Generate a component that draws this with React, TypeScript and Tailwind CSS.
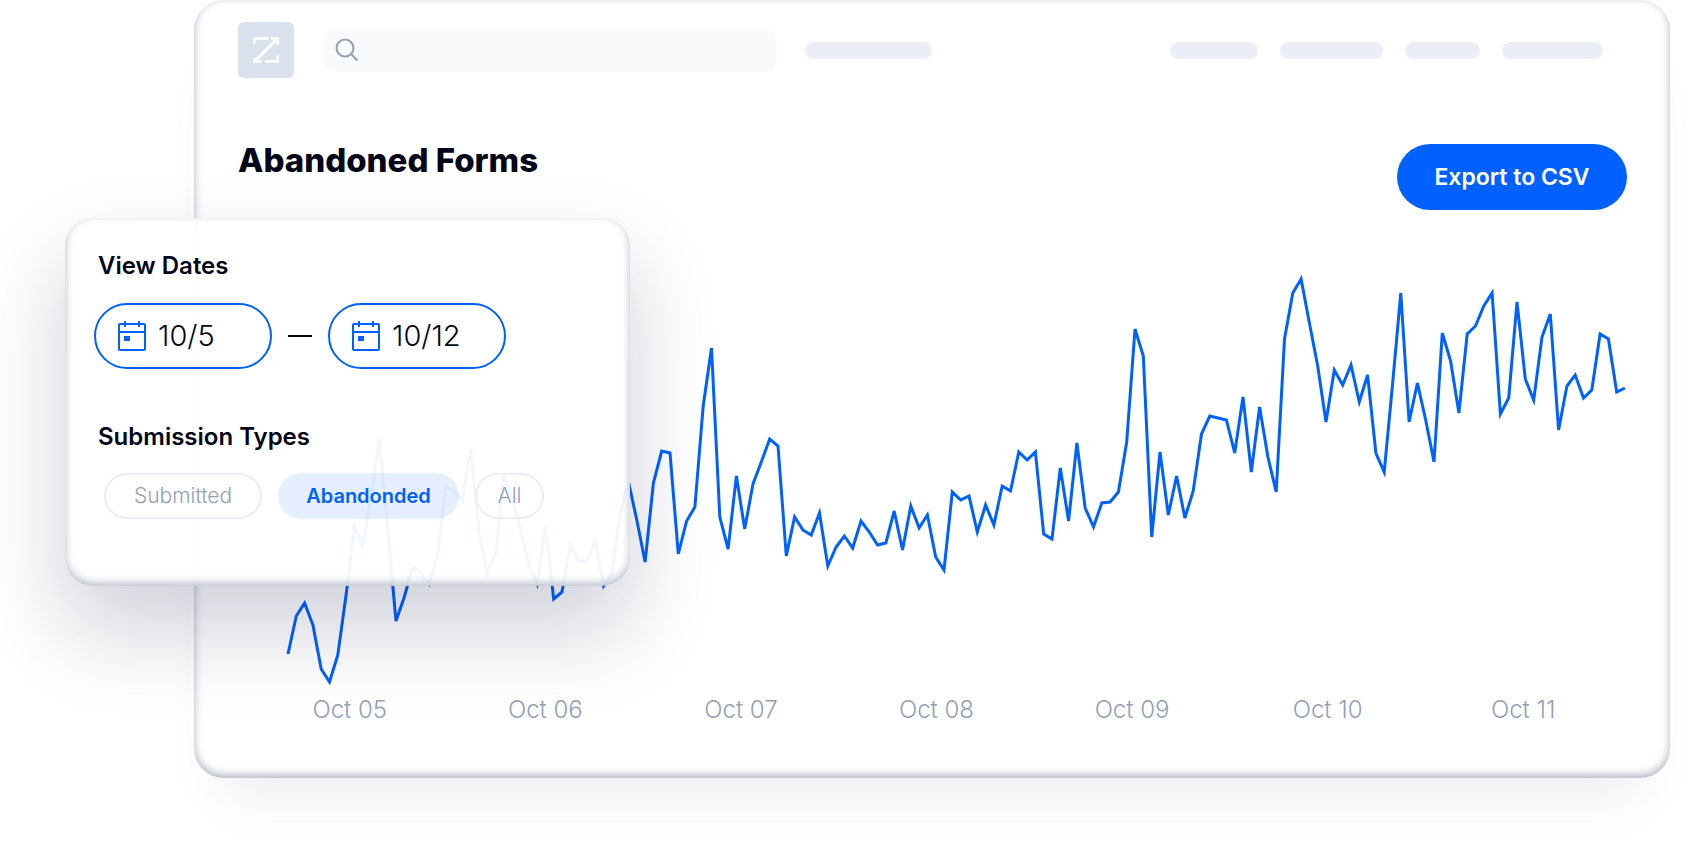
import React from 'react';

type SubmissionType = {
  id: string;
  label: string;
  width: string;
};

const CHART_WIDTH = 1337;
const CHART_HEIGHT = 420;

// Line heights measured down from the top of the chart
const points = [
  384, 346, 333, 355, 399, 412, 385, 325, 257, 275, 227, 168, 260, 351, 327, 297,
  303, 314, 286, 217, 221, 231, 179, 263, 303, 284, 206, 228, 260, 296, 314, 256,
  329, 322, 274, 291, 291, 270, 316, 304, 244, 212, 250, 292, 213, 181, 183, 284,
  251, 237, 136, 78, 247, 279, 206, 259, 214, 192, 169, 176, 286, 247, 260, 265,
  243, 296, 277, 266, 278, 251, 262, 275, 273, 241, 280, 236, 258, 245, 287, 300,
  222, 230, 226, 262, 235, 255, 216, 221, 182, 190, 182, 264, 269, 198, 251, 173,
  238, 257, 233, 232, 222, 172, 59, 86, 267, 182, 245, 206, 248, 221, 164, 146,
  148, 150, 183, 127, 202, 137, 187, 222, 69, 23, 9, 53, 96, 152, 100, 115,
  95, 132, 105, 183, 202, 115, 23, 152, 113, 150, 192, 63, 91, 143, 64, 56,
  36, 23, 144, 128, 32, 109, 130, 67, 44, 160, 116, 105, 128, 120, 64, 69,
  122, 118
];

const days = ["Oct 05", "Oct 06", "Oct 07", "Oct 08", "Oct 09", "Oct 10", "Oct 11"];

const submissionTypes: SubmissionType[] = [
  { id: "submitted", label: "Submitted", width: "w-[158px]" },
  { id: "abandoned", label: "Abandonded", width: "w-[181px]" },
  { id: "all", label: "All", width: "w-[69px]" }
];

const Logo = () => (
  <div className="flex size-14 shrink-0 items-center justify-center rounded-md bg-[#dae0ec]">
    <svg viewBox="0 0 78 78" className="size-[26px]" fill="none" stroke="#fff" strokeWidth="8">
      <path d="M4 22V4H46" />
      <path d="M54 4H74V24" />
      <path d="M36 74H74V54" />
      <path d="M26 74H4V64" />
      <path d="M5 73L73 5" strokeWidth="9" />
    </svg>
  </div>
);

const SearchIcon = () => (
  <svg viewBox="0 0 24 24" className="size-6 shrink-0" fill="none" stroke="#94a0b8" strokeWidth="2">
    <circle cx="10" cy="10" r="8.500" />
    <path d="M16 16L22.500 22.500" />
  </svg>
);

const CalendarIcon = () => (
  <svg viewBox="0 0 28 30" className="h-[30px] w-7 shrink-0" fill="none" stroke="#0061ff" strokeWidth="2">
    <rect x="1" y="3" width="26" height="26" rx="1" />
    <path d="M1 11H27M7 0V6M21 0V6" />
    <rect x="6" y="15" width="6" height="5" fill="#0061ff" stroke="none" />
  </svg>
);

const DateField = ({ label, value }: { label: string; value: string }) => (
  <label className="flex h-[66px] w-[178px] items-center gap-3 rounded-full border-2 border-[#0061ff] pl-[22px] pr-4">
    <CalendarIcon />
    <input
      type="text"
      aria-label={label}
      defaultValue={value}
      className="w-full min-w-0 bg-transparent text-[29px] font-light outline-none"
    />
  </label>
);

const FilterCard = () => {
  const [selected, setSelected] = React.useState("abandoned");

  return (
    <section className="absolute left-[65px] top-[218px] w-[565px] rounded-[28px] bg-white/95 pb-[67px] pl-[29px] pr-7 pt-8 shadow-[0_44px_88px_0_rgba(20,22,70,0.2),inset_0_-3px_8px_rgba(70,85,115,0.4)]">
      <h2 className="px-1 text-2xl font-semibold">View Dates</h2>
      <div className="mt-[21px] flex items-center gap-4">
        <DateField label="Start date" value="10/5" />
        <span className="h-0.5 w-6 bg-[#020617]" />
        <DateField label="End date" value="10/12" />
      </div>
      <h2 className="mt-[52px] px-1 text-2xl font-semibold">Submission Types</h2>
      <div className="mt-5 flex items-center gap-4 px-2.5">
        {submissionTypes.map(type => (
          <button
            key={type.id}
            type="button"
            aria-pressed={selected === type.id}
            onClick={() => setSelected(type.id)}
            className={`h-[46px] rounded-full ${type.width} ${
              selected === type.id
                ? "bg-[#0061ff]/10 text-xl font-semibold text-[#0061ff]"
                : "border-2 border-[#ebeef6] text-[21px] font-light text-[#94a0b8]"
            }`}
          >
            {type.label}
          </button>
        ))}
      </div>
    </section>
  );
};

const App = () => {
  const line = points
    .map((y, i) => `${((i * CHART_WIDTH) / (points.length - 1)).toFixed(1)},${y}`)
    .join(" ");

  return (
    <div className="relative bg-white pb-[66px] pl-[194px] pr-[18px] font-['Inter',sans-serif] text-[#020617]">
      <main className="rounded-[30px] bg-white pb-[50px] pl-11 pr-[43px] pt-[22px] shadow-[0_44px_56px_-32px_rgba(20,22,70,0.09),inset_0_-3px_8px_rgba(70,85,115,0.45)]">
        <header className="flex items-center">
          <Logo />
          <label className="ml-[29px] flex h-[43px] w-[454px] items-center gap-3 rounded-[14px] bg-[#f9fafc] px-3">
            <SearchIcon />
            <input type="text" aria-label="Search" className="w-full min-w-0 bg-transparent text-xl outline-none" />
          </label>
          <span className="ml-7 h-[17px] w-[127px] rounded-full bg-[#ebeef6]" />
          <div className="ml-auto mr-6 flex gap-[22px]">
            <span className="h-[17px] w-[88px] rounded-full bg-[#ebeef6]" />
            <span className="h-[17px] w-[103px] rounded-full bg-[#ebeef6]" />
            <span className="h-[17px] w-[75px] rounded-full bg-[#ebeef6]" />
            <span className="h-[17px] w-[101px] rounded-full bg-[#ebeef6]" />
          </div>
        </header>

        <div className="mt-[66px] flex items-start justify-between">
          <h1 className="text-[33px] leading-8 font-extrabold">Abandoned Forms</h1>
          <button type="button" className="h-[66px] w-[230px] rounded-full bg-[#0061ff] text-[23px] font-semibold text-white">
            Export to CSV
          </button>
        </div>

        <div className="mt-[60px] pl-[50px] pr-0.5">
          <svg
            viewBox={`0 0 ${CHART_WIDTH} ${CHART_HEIGHT}`}
            preserveAspectRatio="none"
            className="block h-[420px] w-full overflow-visible"
            role="img"
            aria-label="Abandoned forms per day"
          >
            <polyline
              points={line}
              fill="none"
              stroke="#0061ff"
              strokeWidth="3"
              vectorEffect="non-scaling-stroke"
            />
          </svg>
        </div>
        <div className="mt-0.5 grid grid-cols-7 pl-3.5 pr-1.5 text-center text-2xl leading-9 font-light text-[#94a0b8]">
          {days.map(day => (
            <span key={day}>{day}</span>
          ))}
        </div>
      </main>

      <FilterCard />
    </div>
  );
};

export default App;
